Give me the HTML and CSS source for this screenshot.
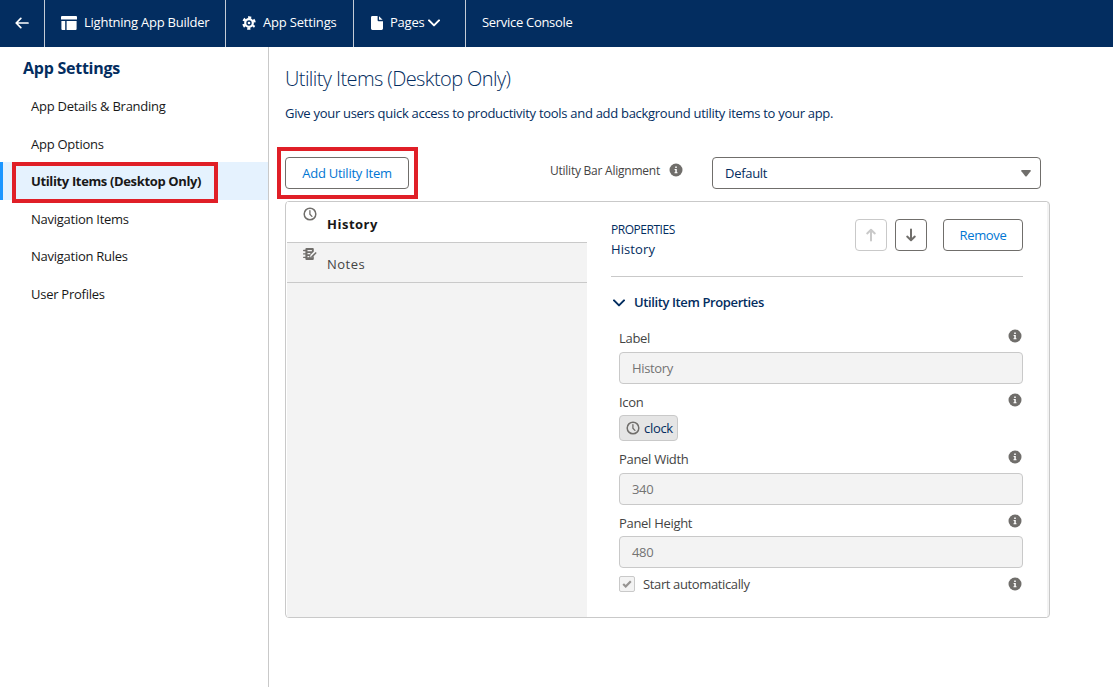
FILE: index.html
```html
<!DOCTYPE html>
<html lang="en">
<head>
    <meta charset="utf-8">
    <title>App Settings</title>
    <link rel="stylesheet" href="styles.css">
</head>
<body>
    <!-- Shared icons -->
    <svg class="defs" width="0" height="0">
        <symbol id="info" viewBox="0 0 14 14">
            <circle cx="7" cy="7" r="6.5" fill="#706e6b"/>
            <path d="M6.2 3.4h1.6v1.5H6.2zM5.6 5.9h2.2v3.4h.7v1h-3v-1h.8V6.900h-.7z" fill="#fff"/>
        </symbol>
        <symbol id="clock" viewBox="0 0 14 14">
            <circle cx="7" cy="7" r="5.8" fill="none" stroke="#706e6b" stroke-width="1.5"/>
            <path d="M6.9 3.6v3.6l2 2.2" fill="none" stroke="#706e6b" stroke-width="1.3" stroke-linecap="round"/>
        </symbol>
        <symbol id="down" viewBox="0 0 12 8">
            <path d="M1 1.4l5 5 5-5" fill="none" stroke="currentColor" stroke-width="2" stroke-linecap="round" stroke-linejoin="round"/>
        </symbol>
        <symbol id="arrow" viewBox="0 0 12 14">
            <path d="M6 1.5V12M2.2 8.6L6 12.2l3.8-3.6" fill="none" stroke="currentColor" stroke-width="2" stroke-linecap="round" stroke-linejoin="round"/>
        </symbol>
    </svg>

    <header class="header">
        <a class="nav back">
            <svg width="14" height="12" viewBox="0 0 14 12"><path d="M13 6H1.6M5.8 1.4L1.2 6l4.6 4.6" fill="none" stroke="#fff" stroke-width="1.7" stroke-linecap="round" stroke-linejoin="round"/></svg>
        </a>
        <a class="nav builder">
            <svg width="16" height="14" viewBox="0 0 16 14" fill="#fff"><path d="M1 0h14a1 1 0 0 1 1 1v2.6H0V1a1 1 0 0 1 1-1zM.4 5h3.8v9H1.4a1 1 0 0 1-1-1zM5.6 5h10v8a1 1 0 0 1-1 1h-9z"/></svg>
            <span class="nav-text">Lightning App Builder</span>
        </a>
        <a class="nav settings">
            <svg width="14" height="14" viewBox="0 0 14 14"><circle cx="7" cy="7" r="5.6" fill="none" stroke="#fff" stroke-width="2.4" stroke-dasharray="2.93 2.93" stroke-dashoffset="1.46" transform="rotate(30 7 7)"/><circle cx="7" cy="7" r="3.8" fill="none" stroke="#fff" stroke-width="2.2"/><circle cx="7" cy="7" r="1.3" fill="#fff"/></svg>
            <span class="nav-text">App Settings</span>
        </a>
        <a class="nav pages">
            <svg width="12" height="14" viewBox="0 0 12 14" fill="#fff"><path d="M1.4 0h5.2v4.2a1 1 0 0 0 1 1H12v7.4a1.4 1.4 0 0 1-1.4 1.4H1.4A1.4 1.4 0 0 1 0 12.6V1.4A1.4 1.4 0 0 1 1.4 0zM8 .2l3.6 3.6H8z"/></svg>
            <span class="nav-text">Pages</span>
            <svg class="chevron" width="12" height="8"><use href="#down"/></svg>
        </a>
        <span class="app-name">Service Console</span>
    </header>

    <div class="page">
        <nav class="sidebar">
            <h1 class="sidebar-title">App Settings</h1>
            <a class="item">App Details &amp; Branding</a>
            <a class="item">App Options</a>
            <a class="item active">
                <span>Utility Items (Desktop Only)</span>
                <span class="marker marker-item"></span>
            </a>
            <a class="item">Navigation Items</a>
            <a class="item">Navigation Rules</a>
            <a class="item">User Profiles</a>
        </nav>

        <main class="main">
            <h2 class="title">Utility Items (Desktop Only)</h2>
            <p class="description">Give your users quick access to productivity tools and add background utility items to your app.</p>

            <div class="toolbar">
                <div class="add-wrap">
                    <button class="button add">Add Utility Item</button>
                    <span class="marker marker-add"></span>
                </div>
                <div class="alignment">
                    <span>Utility Bar Alignment</span>
                    <svg class="info" width="14" height="14"><use href="#info"/></svg>
                </div>
                <div class="select">
                    <span>Default</span>
                    <svg width="10" height="7" viewBox="0 0 10 7"><path d="M.8 0h8.4q1 .3.4 1.2L5.7 6.2q-.7.7-1.4 0L.4 1.2Q-.2.3.8 0z" fill="#706e6b"/></svg>
                </div>
            </div>

            <div class="card">
                <div class="tabs">
                    <div class="tab selected">
                        <svg class="tab-icon" width="14" height="14"><use href="#clock"/></svg>
                        <span>History</span>
                    </div>
                    <div class="tab">
                        <svg class="tab-icon" width="14" height="14" viewBox="0 0 14 14"><path d="M3.4 1h6.4q1 0 1 1v2.4L7.3 8v2.3h2.2l1.3-1.2V12q0 1-1 1H3.4q-1 0-1-1V2q0-1 1-1z" fill="#706e6b"/><path d="M4.5 3.6h4.400M4.500 6.600h2.800M4.500 9.600h1.800" stroke="#f3f3f3" stroke-width="1.100"/><path d="M.6 3.500h2.200M.6 6.900h2.200M.6 10.300h2.200" stroke="#706e6b" stroke-width="1.300" stroke-linecap="round"/><path d="M8.300 9.300l4.400-4.200 1 1-4.200 4.200-1.500.3z" fill="#706e6b"/></svg>
                        <span>Notes</span>
                    </div>
                </div>

                <div class="properties">
                    <div class="properties-head">
                        <div class="names">
                            <div class="kicker">PROPERTIES</div>
                            <div class="name">History</div>
                        </div>
                        <button class="button square disabled"><svg class="up" width="12" height="14"><use href="#arrow"/></svg></button>
                        <button class="button square"><svg width="12" height="14"><use href="#arrow"/></svg></button>
                        <button class="button remove">Remove</button>
                    </div>

                    <h3 class="section"><svg width="12" height="8"><use href="#down"/></svg><span>Utility Item Properties</span></h3>

                    <div class="form">
                        <div class="label"><span>Label</span><svg width="14" height="14"><use href="#info"/></svg></div>
                        <div class="input">History</div>
                        <div class="label icon-label"><span>Icon</span><svg width="14" height="14"><use href="#info"/></svg></div>
                        <div class="pill"><svg width="14" height="14"><use href="#clock"/></svg><span>clock</span></div>
                        <div class="label width-label"><span>Panel Width</span><svg width="14" height="14"><use href="#info"/></svg></div>
                        <div class="input">340</div>
                        <div class="label height-label"><span>Panel Height</span><svg width="14" height="14"><use href="#info"/></svg></div>
                        <div class="input">480</div>
                        <div class="check">
                            <span class="checkbox"><svg width="10" height="8" viewBox="0 0 10 8"><path d="M1.2 4l2.500 2.500L8.800 1.200" fill="none" stroke="#969492" stroke-width="2.200"/></svg></span>
                            <span>Start automatically</span>
                            <svg class="check-info" width="14" height="14"><use href="#info"/></svg>
                        </div>
                    </div>
                </div>
            </div>
        </main>
    </div>
</body>
</html>
```
FILE: styles.css
```css
* {
    box-sizing: border-box;
}

body {
    margin: 0;
    height: 687px;
    overflow: hidden;
    background-color: #fff;
    color: #032d60;
    font-family: "Open Sans", "Noto Sans", sans-serif;
    font-size: 13px;
    line-height: 20px;
    white-space: nowrap;
}

h1, h2, h3, p {
    margin: 0;
}

svg {
    display: block;
    flex-shrink: 0;
}

.defs {
    position: absolute;
}

/* Header */
.header {
    display: flex;
    height: 47px;
    background-color: #032d60;
    color: #fff;
}

.nav {
    display: flex;
    align-items: center;
    height: 47px;
    padding: 0 0 1px 16px;
    border-right: 1px solid #c3cbd6;
}

.back {
    width: 45px;
    padding-left: 15px;
}

.builder {
    width: 181px;
    gap: 7px;
}

.settings {
    width: 128px;
    gap: 7px;
}

.pages {
    width: 112px;
    padding-left: 17px;
    gap: 7px;
}

.chevron {
    margin-left: -3px;
}

.nav-text {
    padding-bottom: 2px;
    letter-spacing: -0.24px;
}

.settings .nav-text {
    letter-spacing: -0.18px;
}

.app-name {
    padding: 12px 0 0 16px;
    letter-spacing: -0.3px;
}

/* Sidebar */
.page {
    display: flex;
    height: 640px;
}

.sidebar {
    width: 269px;
    border-right: 1px solid #c9c9c9;
}

.sidebar-title {
    height: 40.3px;
    padding: 11px 0 0 23px;
    font-size: 16px;
    font-weight: 700;
    letter-spacing: -0.25px;
}

.item {
    position: relative;
    display: flex;
    align-items: center;
    height: 37.5px;
    padding-left: 31px;
    color: #181818;
    letter-spacing: -0.26px;
}

.active {
    padding-left: 28px;
    border-left: 3px solid #1b96ff;
    background-color: #e5f2fe;
    font-weight: 700;
    letter-spacing: -0.36px;
}

/* Red highlight frames */
.marker {
    position: absolute;
    z-index: 1;
    border: 4px solid #e01f27;
}

.marker-item {
    left: 9px;
    top: 0;
    width: 206px;
    height: 41px;
}

.marker-add {
    left: -8px;
    top: -10px;
    width: 141px;
    height: 52px;
}

/* Main area */
.main {
    flex: 1;
    padding-left: 16px;
}

.title {
    height: 56px;
    padding-top: 20px;
    font-size: 20px;
    font-weight: 300;
    line-height: 24px;
    letter-spacing: -0.59px;
}

.description {
    height: 54px;
    letter-spacing: -0.29px;
}

.toolbar {
    display: flex;
    height: 44px;
}

.add-wrap {
    position: relative;
    width: 265px;
}

.button {
    display: flex;
    align-items: center;
    justify-content: center;
    height: 32px;
    padding: 0;
    border: 1px solid #706e6b;
    border-radius: 4px;
    background-color: #fff;
    color: #0176d3;
    font-family: inherit;
    font-size: 13px;
    letter-spacing: -0.25px;
}

.add {
    width: 124px;
}

.alignment {
    display: flex;
    width: 162px;
    padding-top: 4px;
    color: #444;
    font-size: 12px;
    letter-spacing: -0.24px;
}

.alignment .info {
    margin: 2px 0 0 9px;
}

.select {
    display: flex;
    align-items: center;
    justify-content: space-between;
    width: 329px;
    height: 32px;
    padding: 0 9px 0 12px;
    border: 1px solid #706e6b;
    border-radius: 4px;
    letter-spacing: -0.3px;
}

.card {
    display: flex;
    width: 765px;
    height: 417px;
    padding: 0 2px 0 1px;
    border: 1px solid #c9c9c9;
    border-radius: 4px;
    background: linear-gradient(to left, #f3f3f3 2px, #fff 2px);
}

.tabs {
    width: 300px;
    background-color: #f3f3f3;
}

.tab {
    display: flex;
    height: 40px;
    padding-left: 16px;
    gap: 10px;
    border-bottom: 1px solid #c9c9c9;
    color: #444;
    letter-spacing: 0.5px;
}

.tab span {
    padding-top: 11px;
}

.tab-icon {
    margin-top: 4px;
}

.selected {
    height: 41px;
    background-color: #fff;
    color: #181818;
    font-weight: 700;
}

.selected .tab-icon {
    margin-top: 5px;
}

.selected span {
    padding-top: 12px;
}

/* Properties panel */
.properties {
    flex: 1;
    padding: 17px 24px 0;
    background-color: #fff;
}

.properties-head {
    display: flex;
    height: 58px;
    border-bottom: 1px solid #c9c9c9;
}

.names {
    flex: 1;
}

.kicker {
    padding-top: 1px;
    margin-bottom: -1px;
    font-size: 12px;
    letter-spacing: -0.47px;
}

.name {
    letter-spacing: 0.1px;
}

.square {
    width: 32px;
    margin-right: 8px;
    color: #706e6b;
}

.remove {
    width: 80px;
    margin-left: 8px;
    letter-spacing: -0.35px;
}

.disabled {
    border-color: #c9c9c9;
    color: #c9c9c9;
}

.up {
    transform: rotate(180deg);
}

.section {
    display: flex;
    align-items: center;
    gap: 9px;
    height: 51px;
    padding-left: 2px;
    font-size: 13px;
    font-weight: 600;
    letter-spacing: -0.39px;
}

.section span {
    padding-bottom: 2px;
}

.form {
    padding-left: 8px;
}

.label {
    display: flex;
    justify-content: space-between;
    height: 24px;
    padding-right: 1px;
    color: #444;
    letter-spacing: -0.3px;
}

.label svg {
    margin-top: 1px;
}

.input {
    display: flex;
    align-items: center;
    height: 32px;
    padding-left: 12px;
    border: 1px solid #c9c9c9;
    border-radius: 4px;
    background-color: #f3f3f3;
    color: #747474;
    letter-spacing: -0.35px;
}

.icon-label {
    height: 31px;
    padding-top: 8px;
}

.pill {
    display: flex;
    align-items: center;
    width: 59px;
    height: 26px;
    padding-left: 6px;
    gap: 4px;
    border: 1px solid #c9c9c9;
    border-radius: 4px;
    background-color: #e5e5e5;
    letter-spacing: -0.3px;
}

.width-label {
    height: 32px;
    padding-top: 8px;
}

.height-label {
    height: 31px;
    padding-top: 8px;
}

.check {
    display: flex;
    align-items: center;
    height: 32px;
    padding-right: 1px;
    gap: 8px;
    color: #444;
    letter-spacing: -0.37px;
}

.checkbox {
    display: flex;
    align-items: center;
    justify-content: center;
    width: 16px;
    height: 16px;
    border: 1px solid #c9c9c9;
    border-radius: 2px;
    background-color: #f3f3f3;
}

.check-info {
    margin-left: auto;
}
```
